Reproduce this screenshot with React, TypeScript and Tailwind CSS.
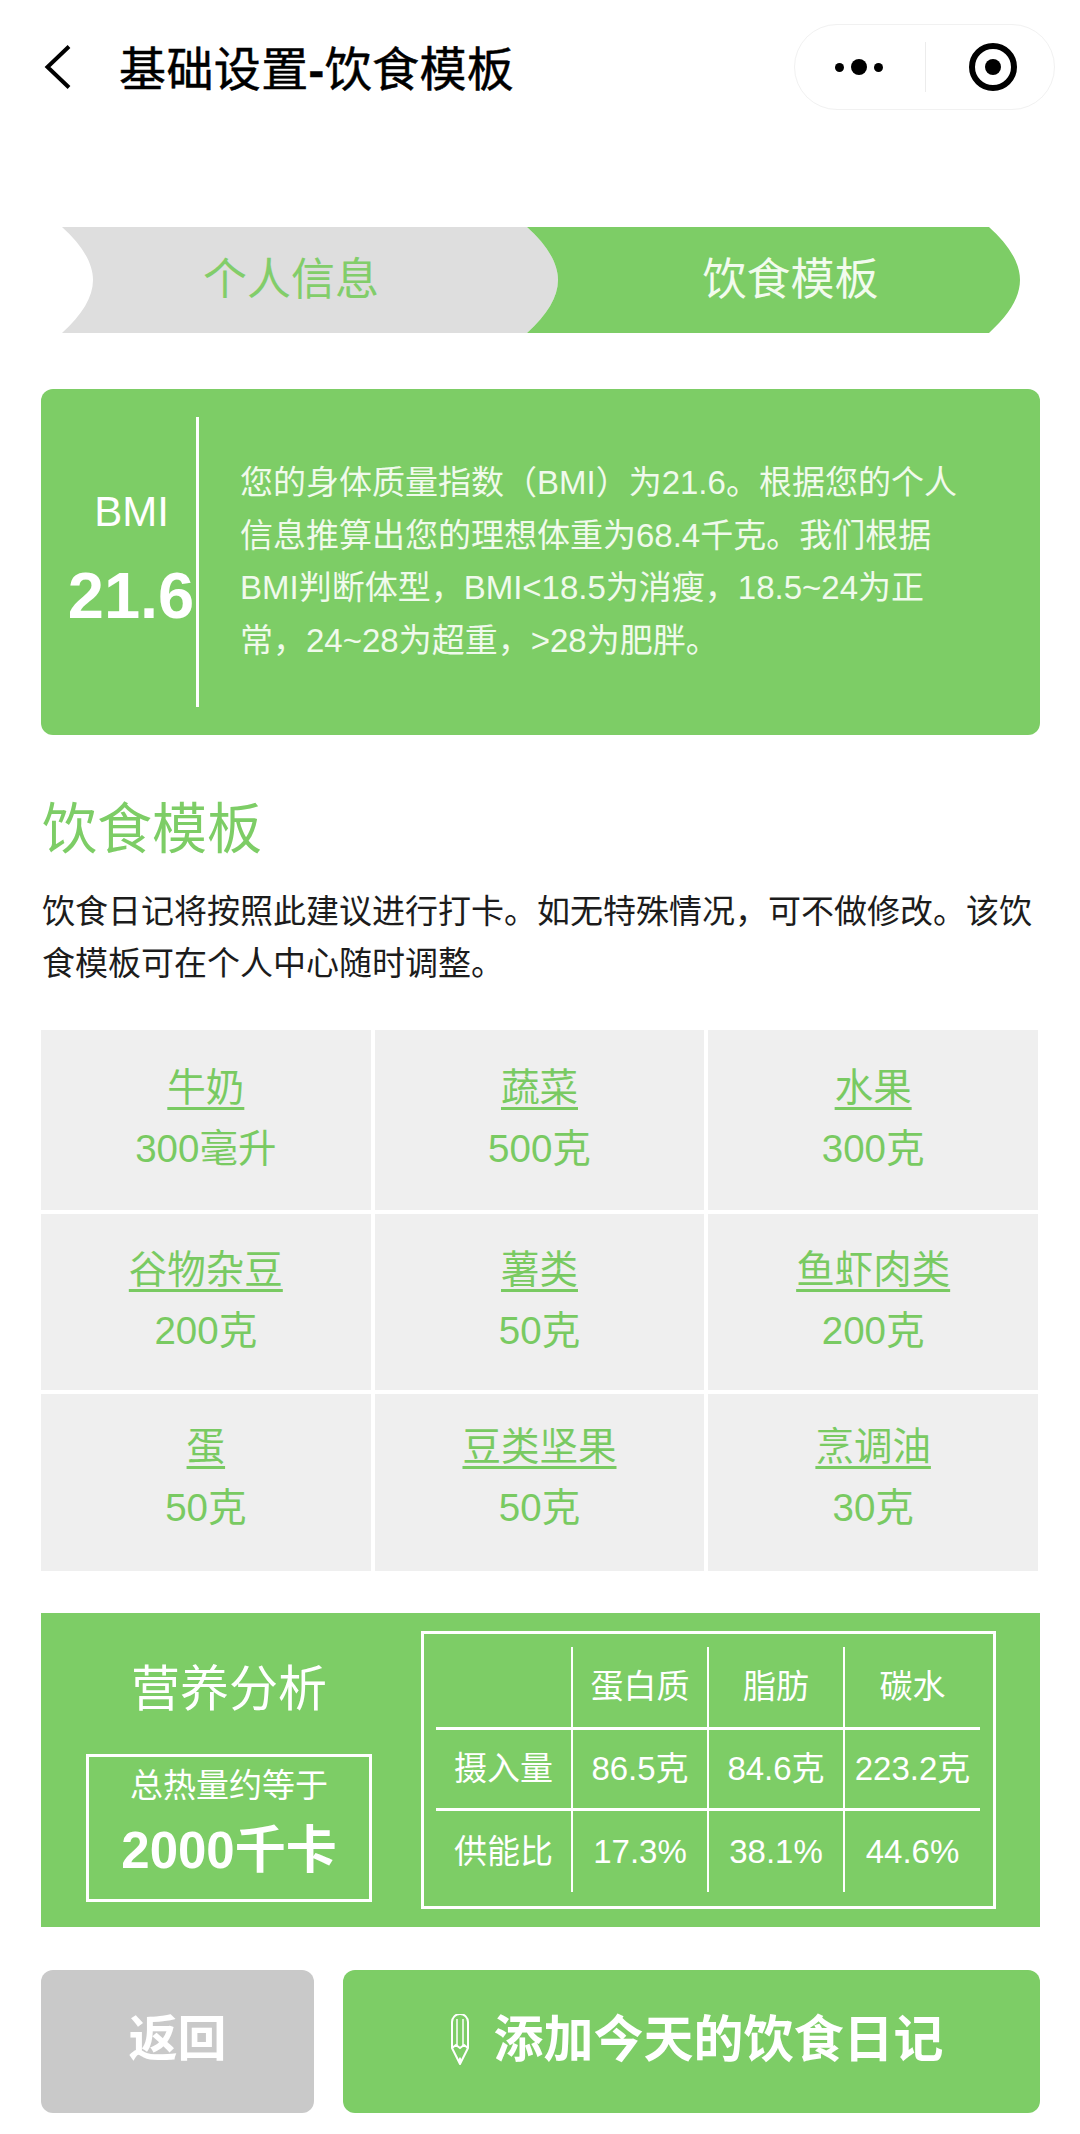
import { Fragment } from 'react';

const foods = [
  ['牛奶', '300毫升'],
  ['蔬菜', '500克'],
  ['水果', '300克'],
  ['谷物杂豆', '200克'],
  ['薯类', '50克'],
  ['鱼虾肉类', '200克'],
  ['蛋', '50克'],
  ['豆类坚果', '50克'],
  ['烹调油', '30克'],
];

const nutrition = [
  ['', '蛋白质', '脂肪', '碳水'],
  ['摄入量', '86.5克', '84.6克', '223.2克'],
  ['供能比', '17.3%', '38.1%', '44.6%'],
];

function Capsule() {
  return (
    <div className="flex h-[86px] w-[261px] items-center rounded-full border border-[#f1f1f1] bg-white">
      <div className="flex h-[50px] w-[131px] items-center justify-center gap-[7px] border-r border-[#ececec] pr-[2px]">
        <span className="h-[9px] w-[9px] rounded-full bg-black" />
        <span className="h-[16px] w-[16px] rounded-full bg-black" />
        <span className="h-[9px] w-[9px] rounded-full bg-black" />
      </div>
      <div className="flex flex-1 items-center justify-center pl-[5px]">
        <svg width="48" height="48" viewBox="0 0 48 48">
          <circle cx="24" cy="24" r="21" fill="none" stroke="#000" strokeWidth="6" />
          <circle cx="24" cy="24" r="8" fill="#000" />
        </svg>
      </div>
    </div>
  );
}

function PencilIcon() {
  return (
    <svg width="20" height="52" viewBox="0 0 20 52" fill="none" stroke="#fff" strokeWidth="2">
      <path d="M2 34V8a8 8 0 0 1 16 0v26L10 50Z" strokeLinejoin="round" />
      <path d="M7 32V5M13 32V5" strokeWidth="1.5" />
      <path d="M2 34l4-3 4 3 4-3 4 3" />
      <path d="M8 46l2-3 2 3-2 4Z" fill="#fff" stroke="none" />
    </svg>
  );
}

export default function App() {
  return (
    <div className="h-[2134px] w-[1080px] overflow-hidden bg-white font-['Liberation_Sans','Noto_Sans_CJK_SC',sans-serif]">
      {/* 顶部导航 */}
      <div className="flex items-center justify-between pl-[44px] pr-[25px] pt-[24px]">
        <div className="flex items-center">
          <svg width="28" height="44" viewBox="0 0 28 44" fill="none" stroke="#000" strokeWidth="4">
            <path d="M25 1.5 3.5 22 25 42.5" />
          </svg>
          <h1 className="ml-[47px] pt-[5px] text-[47px] leading-[60px] tracking-[0.4px] text-black [-webkit-text-stroke:0.5px_#000]">
            基础设置<span className="font-bold">-</span>饮食模板
          </h1>
        </div>
        <Capsule />
      </div>

      {/* 步骤条 */}
      <div className="ml-[62px] mt-[117px] flex h-[106px] text-[44px]">
        <div className="flex h-full w-[496px] items-center justify-center pr-[38px] text-[#82cd6a] bg-[#dedede] [clip-path:path('M0_0H465C485_18_496_36_496_53S485_88_465_106H0C20_88_31_70_31_53S20_18_0_0Z')]">
          个人信息
        </div>
        <div className="-ml-[31px] flex h-full w-[493px] items-center justify-center pl-[34px] text-[#f2fbee] bg-[#7dcd66] [clip-path:path('M0_0H462C482_18_493_36_493_53S482_88_462_106H0C20_88_31_70_31_53S20_18_0_0Z')]">
          饮食模板
        </div>
      </div>

      {/* BMI */}
      <div className="ml-[41px] mr-[40px] mt-[56px] flex h-[346px] rounded-[12px] bg-[#7dcd66] pt-[28px] text-white">
        <div className="flex h-[290px] w-[158px] flex-col items-center border-r-[3px] border-white pt-[70px]">
          <span className="pl-[26px] text-[42px] leading-[50px]">BMI</span>
          <span className="mt-[22px] pl-[25px] text-[65px] font-bold leading-[74px]">21.6</span>
        </div>
        <p className="ml-[41px] pt-[40px] text-[33px] leading-[52.5px] text-[#f0faec]">
          您的身体质量指数（BMI）为21.6。根据您的个人
          <br />
          信息推算出您的理想体重为68.4千克。我们根据
          <br />
          BMI判断体型，BMI&lt;18.5为消瘦，18.5~24为正
          <br />
          常，24~28为超重，&gt;28为肥胖。
        </p>
      </div>

      {/* 饮食模板说明 */}
      <h2 className="ml-[42px] mt-[59px] text-[55px] leading-[70px] text-[#7dcd66]">饮食模板</h2>
      <p className="mx-[42px] mt-[22px] text-[33px] leading-[52px] text-[#1c1c1c]">
        饮食日记将按照此建议进行打卡。如无特殊情况，可不做修改。该饮
        <br />
        食模板可在个人中心随时调整。
      </p>

      <div className="ml-[41px] mt-[40px] grid w-[997px] grid-cols-3 grid-rows-[180px_176px_177px] gap-[4px]">
        {foods.map(([name, amount], i) => (
          <div
            key={name}
            className={`flex flex-col items-center bg-[#efefef] text-[38.5px] leading-[61px] text-[#79ca62] ${i < 3 ? 'pt-[27px]' : i < 6 ? 'pt-[25px]' : 'pt-[22px]'}`}
          >
            <span className="underline decoration-[3px] underline-offset-[6px]">{name}</span>
            <span>{amount}</span>
          </div>
        ))}
      </div>

      {/* 营养分析 */}
      <div className="ml-[41px] mr-[40px] mt-[42px] flex h-[314px] bg-[#7dcd66] text-white">
        <div className="ml-[45px] flex w-[286px] flex-col items-center">
          <div className="mt-[46px] text-[49px] leading-[60px]">营养分析</div>
          <div className="mt-[35px] flex h-[148px] w-[286px] flex-col items-center border-[3px] border-white">
            <span className="mt-[8px] text-[33px] leading-[42px]">总热量约等于</span>
            <span className="mt-[14px] text-[51px] font-bold leading-[60px]">2000千卡</span>
          </div>
        </div>
        <div className="ml-[49px] mt-[18px] h-[278px] w-[575px] border-[3px] border-white px-[12px] py-[13px]">
          <div className="grid grid-cols-[137px_136px_136px_135px] grid-rows-[83px_81px_81px] text-center text-[33px]">
            {nutrition.map((row, r) => (
              <Fragment key={r}>
                {row.map((cell, c) => (
                  <div
                    key={c}
                    className={`flex items-center justify-center border-white ${c < 3 ? 'border-r-2' : ''} ${r < 2 ? 'border-b-[3px]' : ''}`}
                  >
                    {cell}
                  </div>
                ))}
              </Fragment>
            ))}
          </div>
        </div>
      </div>

      {/* 底部按钮 */}
      <div className="ml-[41px] mr-[40px] mt-[43px] flex h-[143px] gap-[29px] text-white">
        <button className="w-[273px] rounded-[12px] bg-[#c9c9c9] pb-[3px] text-[49px] font-bold">返回</button>
        <button className="flex flex-1 items-center justify-center gap-[24px] rounded-[12px] bg-[#7dcd66] pb-[3px] pl-[10px] text-[50px] font-bold">
          <PencilIcon />
          添加今天的饮食日记
        </button>
      </div>
    </div>
  );
}
